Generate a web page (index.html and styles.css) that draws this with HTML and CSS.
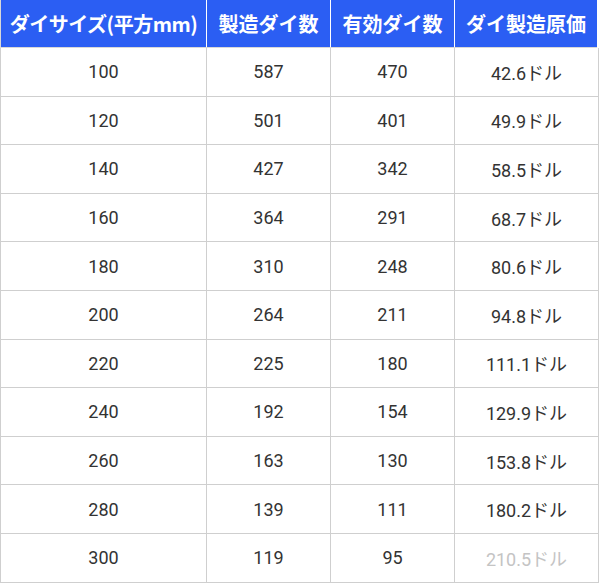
FILE: index.html
```html
<!DOCTYPE html>
<html lang="ja">
<head>
<meta charset="utf-8">
<link rel="stylesheet" href="styles.css">
</head>
<body>
<table class="die-table">
  <colgroup>
    <col class="c1"><col class="c2"><col class="c3"><col class="c4">
  </colgroup>
  <thead>
    <tr>
      <th class="h-size">ダイサイズ(平方mm)</th>
      <th>製造ダイ数</th>
      <th>有効ダイ数</th>
      <th>ダイ製造原価</th>
    </tr>
  </thead>
  <tbody>
    <tr><td>100</td><td>587</td><td>470</td><td>42.6ドル</td></tr>
    <tr><td>120</td><td>501</td><td>401</td><td>49.9ドル</td></tr>
    <tr><td>140</td><td>427</td><td>342</td><td>58.5ドル</td></tr>
    <tr><td>160</td><td>364</td><td>291</td><td>68.7ドル</td></tr>
    <tr><td>180</td><td>310</td><td>248</td><td>80.6ドル</td></tr>
    <tr><td>200</td><td>264</td><td>211</td><td>94.8ドル</td></tr>
    <tr><td>220</td><td>225</td><td>180</td><td>111.1ドル</td></tr>
    <tr><td>240</td><td>192</td><td>154</td><td>129.9ドル</td></tr>
    <tr><td>260</td><td>163</td><td>130</td><td>153.8ドル</td></tr>
    <tr><td>280</td><td>139</td><td>111</td><td>180.2ドル</td></tr>
    <tr><td>300</td><td>119</td><td>95</td><td class="faded">210.5ドル</td></tr>
  </tbody>
</table>
</body>
</html>
```

FILE: styles.css
```css
html, body {
  margin: 0;
  padding: 0;
  background: #ffffff;
}

.die-table {
  border-collapse: collapse;
  table-layout: fixed;
  width: 598px;
  font-family: Roboto, "Noto Sans CJK JP", sans-serif;
}

.c1 { width: 206px; }
.c2 { width: 124px; }
.c3 { width: 124px; }
.c4 { width: 144px; }

.die-table th {
  background: #2b5ef3;
  color: #ffffff;
  font-family: "Noto Sans CJK JP", sans-serif;
  font-weight: 700;
  font-size: 20px;
  height: 47px;
  padding: 0;
  text-align: center;
  border-left: 1px solid #ffffff;
  border-right: 1px solid #ffffff;
  border-bottom: 1px solid #d8d8d8;
  white-space: nowrap;
}

.die-table th.h-size {
  letter-spacing: -0.5px;
}

.die-table th:first-child { border-left: 1px solid #d8d8d8; }
.die-table th:last-child { border-right: 3px solid #ffffff; }

.die-table td {
  height: 47.6px;
  padding: 0;
  text-align: center;
  color: #333333;
  font-size: 18px;
  border: 1px solid #cfcfcf;
}

.die-table td.faded {
  color: #c4c4c4;
}
```
